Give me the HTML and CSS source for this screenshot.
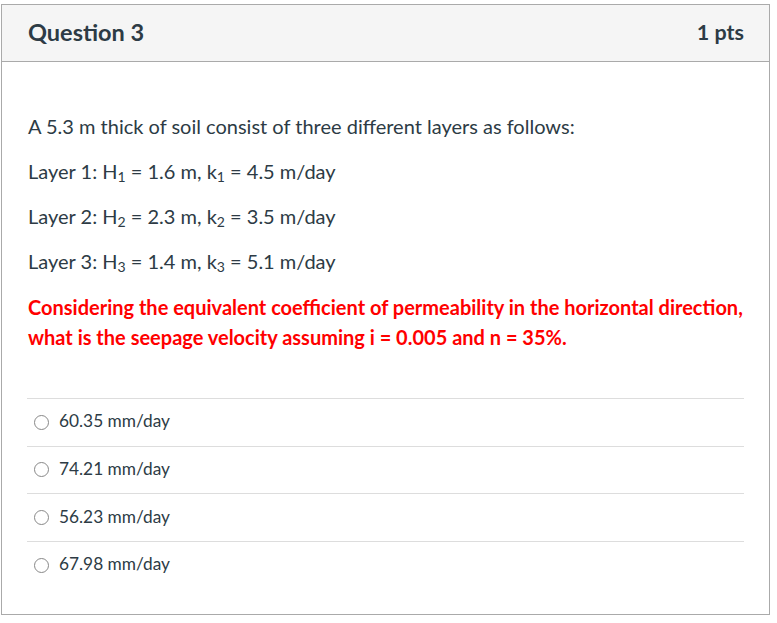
FILE: index.html
```html
<!DOCTYPE html>
<html>
<head>
<meta charset="utf-8">
<link rel="stylesheet" href="styles.css">
</head>
<body>
<div class="question">
  <div class="q-header">
    <span class="q-title">Question 3</span>
    <span class="q-pts">1 pts</span>
  </div>
  <div class="q-body">
    <div class="q-text">
      <p>A 5.3 m thick of soil consist of three different layers as follows:</p>
      <p>Layer 1: H<sub>1</sub> = 1.6 m, k<sub>1</sub> = 4.5 m/day</p>
      <p>Layer 2: H<sub>2</sub> = 2.3 m, k<sub>2</sub> = 3.5 m/day</p>
      <p>Layer 3: H<sub>3</sub> = 1.4 m, k<sub>3</sub> = 5.1 m/day</p>
      <p class="red">Considering the equivalent coefficient of permeability in the horizontal direction, what is the seepage velocity assuming i = 0.005 and n = 35%.</p>
    </div>
    <div class="answers">
      <div class="answer"><span class="radio"></span><span>60.35 mm/day</span></div>
      <div class="answer"><span class="radio"></span><span>74.21 mm/day</span></div>
      <div class="answer"><span class="radio"></span><span>56.23 mm/day</span></div>
      <div class="answer"><span class="radio"></span><span>67.98 mm/day</span></div>
    </div>
  </div>
</div>
</body>
</html>
```
FILE: styles.css
```css
html, body {
  margin: 0;
  padding: 0;
  background: #fff;
}
body {
  font-family: Lato, "Open Sans", sans-serif;
  color: #2d3b45;
}
.question {
  box-sizing: border-box;
  width: 769px;
  height: 611px;
  margin: 4px 0 0 1px;
  border: 1px solid #aaaaaa;
  display: flex;
  flex-direction: column;
}
.q-header {
  box-sizing: border-box;
  height: 57px;
  background: #f5f5f5;
  border-bottom: 1px solid #aaaaaa;
  display: flex;
  align-items: center;
  justify-content: space-between;
  padding: 0 25px 3px 26px;
}
.q-title {
  font-size: 23.5px;
  font-weight: 700;
}
.q-pts {
  font-size: 21.5px;
  font-weight: 700;
}
.q-body {
  padding: 0 25px;
  display: flex;
  flex-direction: column;
}
.q-text {
  padding: 51px 0 0 1px;
  display: flex;
  flex-direction: column;
  gap: 18px;
}
.q-text p {
  margin: 0;
  font-size: 20px;
  line-height: 27px;
}
.q-text sub {
  font-size: 14px;
  line-height: 0;
  vertical-align: -3px;
}
.q-text p.red {
  color: #ff0000;
  font-weight: 700;
  line-height: 30px;
  margin-top: -1px;
}
.answers {
  margin-top: 46px;
  display: flex;
  flex-direction: column;
}
.answer {
  box-sizing: border-box;
  height: 47.67px;
  border-top: 1px solid #dddddd;
  display: flex;
  align-items: center;
  padding: 0 0 3px 7px;
  font-size: 17.3px;
}
.radio {
  box-sizing: border-box;
  width: 15px;
  height: 15px;
  border: 1px solid #888;
  border-radius: 50%;
  margin: 3px 10px 0 0;
}
```
